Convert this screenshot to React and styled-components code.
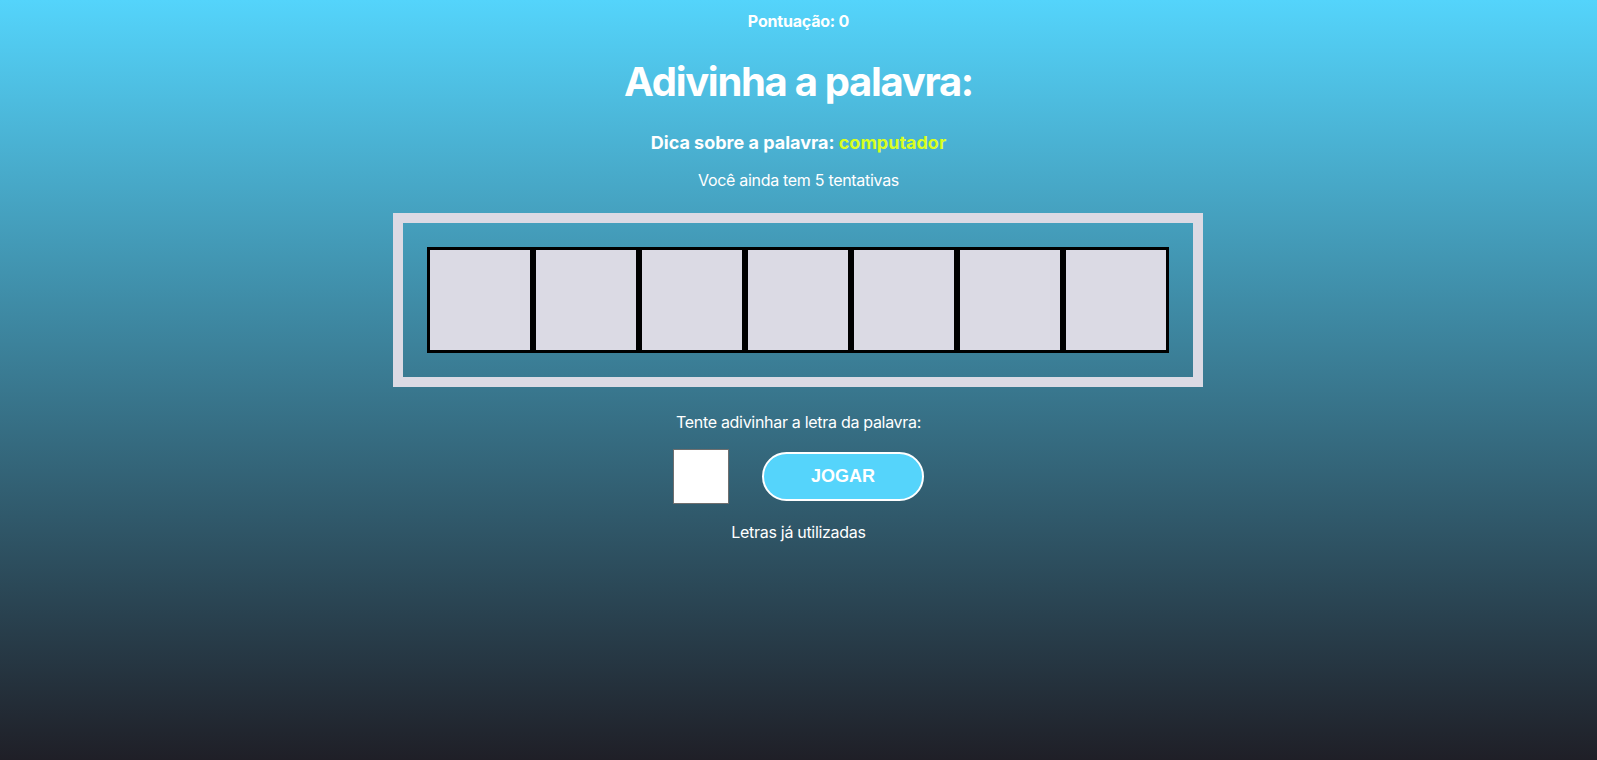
import React from "react";
import styled, { createGlobalStyle } from "styled-components";

const Global = createGlobalStyle`
  html, body { margin: 0; padding: 0; }
  body {
    font-family: Inter, "Noto Sans", sans-serif;
    background: linear-gradient(180deg, #54d4fb 0%, #1f1f27 100%);
    min-height: 100vh;
    color: #ffffff;
  }
`;

const Page = styled.main`
  min-height: 100vh;
  display: flex;
  flex-direction: column;
  align-items: center;
  background: linear-gradient(180deg, #54d4fb 0%, #1f1f27 100%);
`;

const Score = styled.p`
  margin: 11px 0 0;
  font-size: 16px;
  line-height: 20px;
  font-weight: 700;
  letter-spacing: -0.2px;
`;

const Title = styled.h1`
  margin: 27px 0 0;
  font-size: 40px;
  line-height: 48px;
  font-weight: 700;
  letter-spacing: -1.3px;
`;

const Hint = styled.p`
  margin: 26px 0 0;
  font-size: 18px;
  line-height: 22px;
  font-weight: 700;
`;

const HintWord = styled.span`
  color: #d9ff1f;
`;

const Info = styled.p`
  margin: ${(p) => p.$mt}px 0 0;
  font-size: 16px;
  line-height: 20px;
  font-weight: 400;
  letter-spacing: -0.3px;
`;

const Board = styled.section`
  margin: 23px 2px 0 0;
  border: 10px solid #dbdae4;
  padding: 24px;
  display: flex;
`;

const Cell = styled.div`
  width: 100px;
  height: 100px;
  border: 3px solid #000;
  background: #dbdae4;
`;

const Controls = styled.div`
  margin-top: 17px;
  display: flex;
  align-items: center;
  gap: 33px;
`;

const LetterInput = styled.input`
  box-sizing: border-box;
  width: 56px;
  height: 55px;
  background: #fff;
  border: 1px solid #6f6f6f;
  font-size: 24px;
  text-align: center;
  outline: none;
`;

const PlayButton = styled.button`
  box-sizing: border-box;
  width: 162px;
  height: 49px;
  border-radius: 25px;
  border: 2px solid #ffffff;
  background: #55d4fb;
  color: #ffffff;
  font-family: "Liberation Sans", Arial, sans-serif;
  font-weight: 700;
  font-size: 18px;
  cursor: pointer;
`;

export default function App() {
  const cells = Array.from({ length: 7 });
  return (
    <>
      <Global />
      <Page>
        <Score>Pontuação: 0</Score>
        <Title>Adivinha a palavra:</Title>
        <Hint>
          Dica sobre a palavra: <HintWord>computador</HintWord>
        </Hint>
        <Info $mt={16}>Você ainda tem 5 tentativas</Info>
        <Board>
          {cells.map((_, i) => (
            <Cell key={i} />
          ))}
        </Board>
        <Info $mt={25}>Tente adivinhar a letra da palavra:</Info>
        <Controls>
          <LetterInput maxLength={1} />
          <PlayButton>JOGAR</PlayButton>
        </Controls>
        <Info $mt={18}>Letras já utilizadas</Info>
      </Page>
    </>
  );
}
